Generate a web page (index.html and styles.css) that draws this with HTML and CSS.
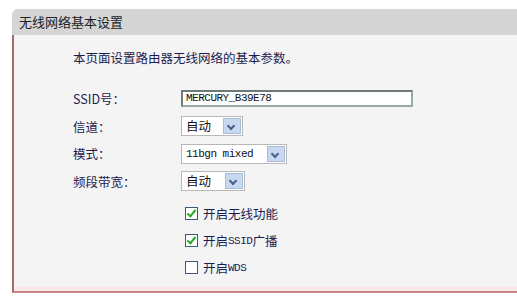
FILE: index.html
```html
<!DOCTYPE html>
<html lang="zh-CN">
<head>
    <meta charset="UTF-8">
    <title>无线网络基本设置</title>
    <link rel="stylesheet" href="styles.css">
</head>
<body>
    <div class="panel">
        <!-- Title bar -->
        <div class="panel-title">无线网络基本设置</div>

        <div class="panel-body">
            <p class="intro">本页面设置路由器无线网络的基本参数。</p>

            <div class="form">
                <div class="row">
                    <span class="label">SSID号：</span>
                    <span class="text-input">MERCURY_B39E78</span>
                </div>
                <div class="row">
                    <span class="label">信道：</span>
                    <span class="select select-auto"><span class="value">自动</span><span class="arrow"></span></span>
                </div>
                <div class="row">
                    <span class="label">模式：</span>
                    <span class="select select-mode"><span class="value mono">11bgn mixed</span><span class="arrow"></span></span>
                </div>
                <div class="row">
                    <span class="label">频段带宽：</span>
                    <span class="select select-width"><span class="value">自动</span><span class="arrow"></span></span>
                </div>

                <div class="checks">
                    <div class="check-row"><span class="box checked"></span>开启无线功能</div>
                    <div class="check-row"><span class="box checked"></span>开启<span class="mono">SSID</span>广播</div>
                    <div class="check-row"><span class="box"></span>开启<span class="mono">WDS</span></div>
                </div>
            </div>
        </div>
    </div>
</body>
</html>
```

FILE: styles.css
```css
/* Page */
body {
    margin: 0;
    padding: 9px 0 0 12px;
    background: #fff;
    font-family: "Noto Sans CJK SC", "Noto Sans", sans-serif;
    font-size: 12px;
    color: #1c1c50;
}

/* Panel */
.panel {
    width: 505px;
}

.panel-title {
    height: 26px;
    line-height: 26px;
    padding-left: 7px;
    background: #d5d5d5;
    border-top-left-radius: 6px;
    font-size: 13px;
    color: #222;
}

.panel-body {
    box-sizing: border-box;
    height: 258px;
    padding: 16px 0 0 59px;
    background: #f4f4f4;
    border-left: 2px solid #a86a6a;
    border-bottom: 2px solid #c98686;
    box-shadow: inset 0 -4px 0 #fde8e6;
}

.intro {
    margin: 0 0 20px;
    line-height: 14px;
    font-size: 12.5px;
}

/* Form rows */
.row {
    display: flex;
    align-items: center;
    height: 27.5px;
    font-size: 12.5px;
}

.label {
    width: 108px;
}

.mono {
    font-family: "Liberation Mono", monospace;
    font-size: 11px;
    letter-spacing: -0.5px;
}

.text-input {
    box-sizing: border-box;
    width: 232px;
    height: 17px;
    line-height: 13px;
    padding-left: 3px;
    background: #fff;
    border: 2px solid #6e7a7a;
    border-right-color: #9aa;
    border-bottom-color: #9aa;
    font-family: "Liberation Mono", monospace;
    font-size: 11px;
    letter-spacing: -0.5px;
    color: #111;
}

/* Drop-down boxes */
.select {
    display: flex;
    box-sizing: border-box;
    height: 20px;
    background: #fff;
    border: 1px solid #b8b8b8;
    color: #111;
}

.select .value {
    flex: 1;
    line-height: 18px;
    padding-left: 4px;
}

.select .arrow {
    width: 16px;
    margin: 1px;
    background: #c8d8f0;
    border: 1px solid #a8bcd8;
    position: relative;
}

.select .arrow::after {
    content: "";
    position: absolute;
    left: 4px;
    top: 4px;
    width: 4px;
    height: 4px;
    border-right: 2px solid #4a5e8a;
    border-bottom: 2px solid #4a5e8a;
    transform: rotate(45deg);
}

.select-auto { width: 62px; }
.select-mode { width: 106px; }
.select-width { width: 64px; }
.select-width .arrow { margin-left: 12px; }

/* Check boxes */
.checks {
    padding-top: 5px;
}

.check-row {
    display: flex;
    align-items: center;
    height: 27px;
    padding-left: 112px;
    font-size: 12.5px;
}

.box {
    box-sizing: border-box;
    width: 13px;
    height: 13px;
    margin-right: 5px;
    background: #fff;
    border: 1px solid #3a5a7a;
    position: relative;
}

.box.checked::after {
    content: "";
    position: absolute;
    left: 3px;
    top: 0;
    width: 3px;
    height: 7px;
    border-right: 2px solid #22aa22;
    border-bottom: 2px solid #22aa22;
    transform: rotate(40deg);
}
```
